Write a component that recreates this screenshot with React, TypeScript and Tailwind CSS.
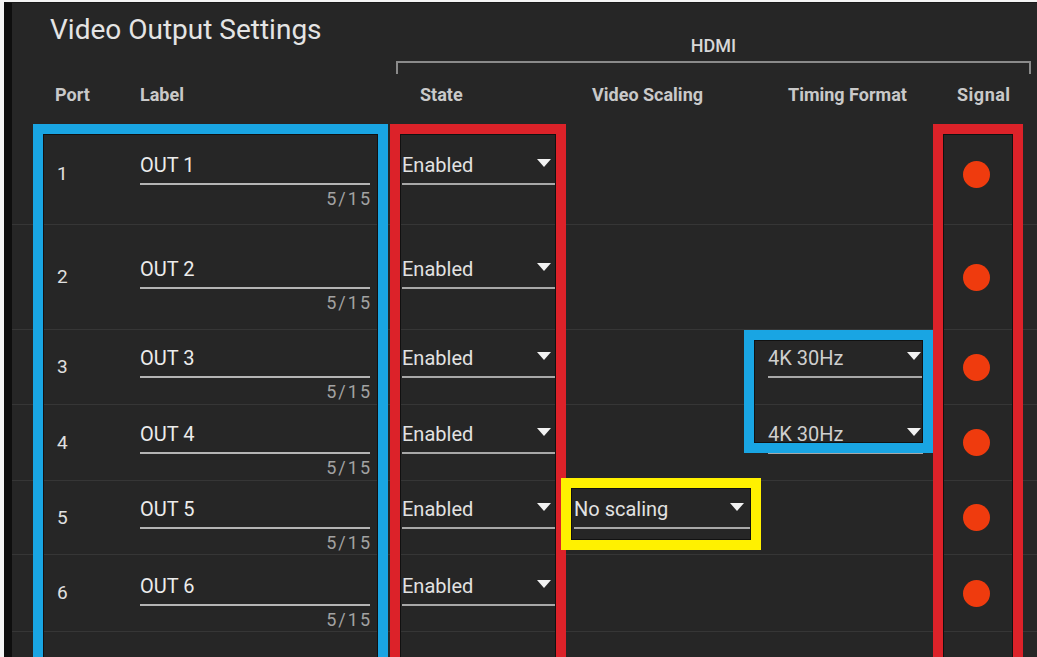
import React from "react";

const FONT = { fontFamily: "Roboto, 'Noto Sans', Arial, sans-serif" };

type RowSpec = {
  port: string;
  label: string;
  h: string;
  pt: string;
  scaling?: boolean;
  timing?: boolean;
};

const rows: RowSpec[] = [
  { port: "1", label: "OUT 1", h: "h-[101px]", pt: "pt-[30px]" },
  { port: "2", label: "OUT 2", h: "h-[105px]", pt: "pt-[33px]" },
  { port: "3", label: "OUT 3", h: "h-[75px]", pt: "pt-[17px]", timing: true },
  { port: "4", label: "OUT 4", h: "h-[76px]", pt: "pt-[18px]", timing: true },
  { port: "5", label: "OUT 5", h: "h-[74px]", pt: "pt-[17px]", scaling: true },
  { port: "6", label: "OUT 6", h: "h-[77px]", pt: "pt-[20px]" },
];

const GRID = "grid grid-cols-[128px_262px_172px_194px_155px_1fr]";

function Caret() {
  return (
    <svg width="14" height="8" viewBox="0 0 14 8" className="shrink-0 mt-[-5px]">
      <polygon points="0,0 14,0 7,8" fill="#f2f2f2" />
    </svg>
  );
}

function Dropdown({
  value,
  width,
  pad,
  color = "text-[#e2e2e2]",
}: {
  value: string;
  width: string;
  pad: string;
  color?: string;
}) {
  return (
    <div className={`${width}`}>
      <div className={`flex items-center justify-between h-[22px] ${pad}`}>
        <span className={`text-[20px] leading-[22px] ${color}`}>{value}</span>
        <Caret />
      </div>
      <div className="mt-[7px] h-[2px] bg-[#a8a8a8]" />
    </div>
  );
}

function Box({ cls }: { cls: string }) {
  return (
    <div className={`absolute border-[10px] ${cls}`}>
      <div className="w-full h-full shadow-[inset_0_0_0_1px_#111]" />
    </div>
  );
}

export default function App() {
  return (
    <div
      className="relative w-[1037px] h-[657px] overflow-hidden bg-[#f4f4f4]"
      style={FONT}
    >
      <div className="ml-[4px] mt-[2px] h-[655px] border-l-[8px] border-[#0e0e0e] bg-[#262626] border-t border-t-[#1a1a1a]">
        {/* Title + HDMI */}
        <div className="flex h-[71px]">
          <div className="w-[384px] pl-[38px] pt-[11px]">
            <h1 className="text-[28px] leading-[32px] text-[#e4e4e4] font-normal">
              Video Output Settings
            </h1>
          </div>
          <div className="flex-1 mr-[6px] flex flex-col">
            <div className="pt-[33px] text-center text-[18px] leading-[20px] font-medium text-[#d8d8d8]">
              HDMI
            </div>
            <div className="mt-[5px] h-[14px] border-t-2 border-x-2 border-[#8a8a8a]" />
          </div>
        </div>

        {/* Header row */}
        <div className={`${GRID} h-[40px] items-center mb-[10px] text-[18px] font-bold text-[#c9c9c9]`}>
          <div className="pl-[43px]">Port</div>
          <div>Label</div>
          <div className="pl-[18px]">State</div>
          <div className="pl-[18px]">Video Scaling</div>
          <div className="pl-[20px]">Timing Format</div>
          <div className="pl-[34px] tracking-[0.5px]">Signal</div>
        </div>

        {/* Data rows */}
        {rows.map((r) => (
          <div key={r.port} className={`${GRID} ${r.h} border-b border-[#363636]`}>
            <div className="pl-[45px] self-center text-[19px] leading-[22px] text-[#e0e0e0]">
              {r.port}
            </div>
            <div className={r.pt}>
              <div className="w-[230px]">
                <div className="h-[22px] text-[20px] leading-[22px] text-[#ececec]">{r.label}</div>
                <div className="mt-[7px] h-[2px] bg-[#b4b4b4]" />
                <div className="mt-[5px] mr-[-2px] text-right text-[18px] leading-[18px] tracking-[2px] text-[#a2a2a2]">
                  5/15
                </div>
              </div>
            </div>
            <div className={r.pt}>
              <Dropdown value="Enabled" width="w-[154px]" pad="pr-[5px]" />
            </div>
            <div className={r.pt}>
              {r.scaling && <Dropdown value="No scaling" width="w-[176px]" pad="pr-[6px]" />}
            </div>
            <div className={r.pt}>
              {r.timing && (
                <Dropdown value="4K 30Hz" width="w-[155px]" pad="pr-[2px]" color="text-[#cfcfcf]" />
              )}
            </div>
            <div className="self-center pl-[40px]">
              <div className="w-[27px] h-[27px] rounded-full bg-[#ef3b0e]" />
            </div>
          </div>
        ))}
      </div>

      {/* Annotation boxes */}
      <Box cls="left-[33px] top-[124px] w-[355px] h-[545px] border-[#19a5e3]" />
      <Box cls="left-[390px] top-[124px] w-[176px] h-[545px] border-[#dc2229]" />
      <Box cls="left-[933px] top-[124px] w-[90px] h-[545px] border-[#dc2229]" />
      <Box cls="left-[744px] top-[330px] w-[189px] h-[123px] border-[#19a5e3]" />
      <Box cls="left-[561px] top-[478px] w-[200px] h-[72px] border-[#fff100]" />
    </div>
  );
}
